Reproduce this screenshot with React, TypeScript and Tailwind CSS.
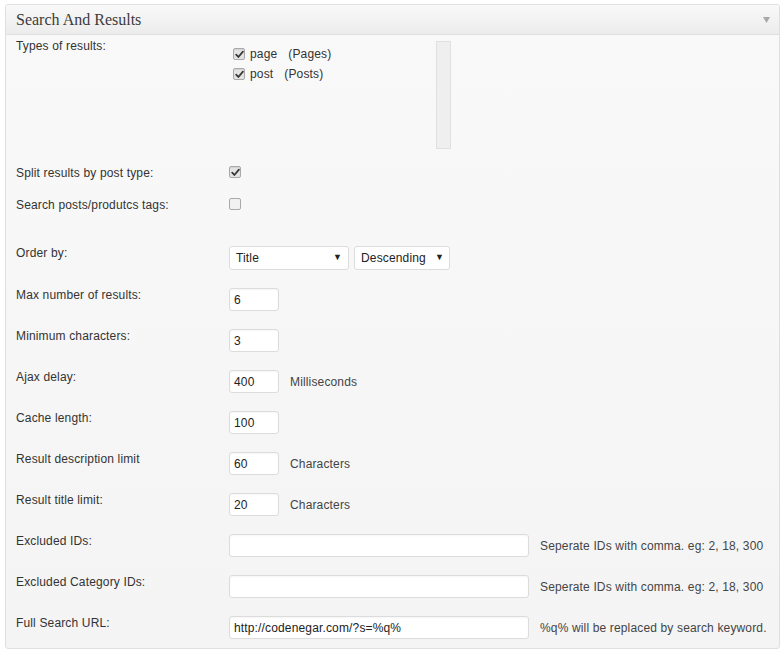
import React from "react";

const font = { fontFamily: '"Liberation Sans", Arial, sans-serif' };

function Check({ checked }: { checked: boolean }) {
  return (
    <span className="flex h-[12px] w-[12px] items-center justify-center rounded-[2px] border border-[#a9a9a9] bg-[#e4e4e4] shadow-[inset_0_1px_1px_rgba(0,0,0,0.08)]">
      {checked && (
        <svg width="9" height="9" viewBox="0 0 9 9">
          <path d="M1.2 4.6 L3.4 7 L7.9 1.6" fill="none" stroke="#3a3a3a" strokeWidth="1.8" strokeLinecap="round" strokeLinejoin="round" />
        </svg>
      )}
    </span>
  );
}

function Input({ value, wide, after }: { value: string; wide?: boolean; after?: string }) {
  return (
    <div className="mt-[1px] flex items-center">
      <div
        className={`flex h-[23px] items-center rounded-[3px] border border-[#dcdcdc] bg-white pl-[4px] text-[12px] text-[#222] shadow-[inset_0_1px_2px_rgba(0,0,0,0.04)] ${wide ? "w-[300px]" : "w-[50px]"}`}
      >
        {value}
      </div>
      {after && <span className="ml-[11px] text-[12px] text-[#444]">{after}</span>}
    </div>
  );
}

function Row({ label, children }: { label: string; children: React.ReactNode }) {
  return (
    <div className="flex h-[41px] items-start">
      <div className="w-[213px] text-[12px] leading-[16px] text-[#333]">{label}</div>
      {children}
    </div>
  );
}

export default function App() {
  return (
    <div className="min-h-[654px] bg-white pl-[5px] pt-[4px] tracking-[0.15px]" style={font}>
      <div className="w-[775px] overflow-hidden rounded-[3px] border border-[#dfdfdf] bg-gradient-to-b from-[#f9f9f9] to-[#f4f4f4]">
        {/* header */}
        <div className="flex h-[30px] items-center justify-between border-b border-[#dfdfdf] bg-gradient-to-b from-[#f9f9f9] to-[#ececec] pl-[10px] pr-[9px]">
          <span className="text-[16px] tracking-normal text-[#3c3c3c]" style={{ fontFamily: '"Liberation Serif", "Times New Roman", serif' }}>
            Search And Results
          </span>
          <svg width="7" height="6" viewBox="0 0 7 6" className="mt-[1px]">
            <path d="M0 0 H7 L3.5 6 Z" fill="#a8a8a8" />
          </svg>
        </div>

        <div className="pl-[10px]">
          {/* types of results */}
          <div className="flex h-[130px] items-start">
            <div className="w-[213px] pt-[3px] text-[12px] leading-[16px] text-[#333]">Types of results:</div>
            <div className="mt-[6px] flex h-[108px] w-[222px]">
              <div className="flex-1 pl-[4px] pt-[3px] text-[12px] text-[#333]">
                <div className="flex h-[20px] items-center">
                  <Check checked />
                  <span className="ml-[5px]">page</span>
                  <span className="ml-[11px]">(Pages)</span>
                </div>
                <div className="flex h-[20px] items-center">
                  <Check checked />
                  <span className="ml-[5px]">post</span>
                  <span className="ml-[11px]">(Posts)</span>
                </div>
              </div>
              <div className="h-full w-[15px] border border-[#e0e0e0] bg-[#efefef]" />
            </div>
          </div>

          {/* split */}
          <div className="flex h-[32px] items-start">
            <div className="w-[213px] text-[12px] leading-[16px] text-[#333]">Split results by post type:</div>
            <div className="mt-[1px] flex">
              <Check checked />
            </div>
          </div>

          {/* tags */}
          <div className="flex h-[48px] items-start">
            <div className="w-[213px] text-[12px] leading-[16px] text-[#333]">Search posts/produtcs tags:</div>
            <div className="mt-[1px] flex">
              <span className="flex h-[12px] w-[12px] rounded-[2px] border border-[#a9a9a9] bg-[#f1f1f1]" />
            </div>
          </div>

          {/* order by */}
          <div className="flex h-[42px] items-start">
            <div className="w-[213px] text-[12px] leading-[16px] text-[#333]">Order by:</div>
            <div className="mt-[1px] flex gap-[5px]">
              <div className="flex h-[24px] w-[120px] items-center justify-between rounded-[3px] border border-[#dcdcdc] bg-white pl-[6px] pr-[6px] text-[12px] text-[#222]">
                <span>Title</span>
                <span className="text-[9px]">▼</span>
              </div>
              <div className="flex h-[24px] w-[96px] items-center justify-between rounded-[3px] border border-[#dcdcdc] bg-white pl-[6px] pr-[5px] text-[12px] text-[#222]">
                <span>Descending</span>
                <span className="text-[9px]">▼</span>
              </div>
            </div>
          </div>

          <Row label="Max number of results:">
            <Input value="6" />
          </Row>
          <Row label="Minimum characters:">
            <Input value="3" />
          </Row>
          <Row label="Ajax delay:">
            <Input value="400" after="Milliseconds" />
          </Row>
          <Row label="Cache length:">
            <Input value="100" />
          </Row>
          <Row label="Result description limit">
            <Input value="60" after="Characters" />
          </Row>
          <Row label="Result title limit:">
            <Input value="20" after="Characters" />
          </Row>
          <Row label="Excluded IDs:">
            <Input value="" wide after="Seperate IDs with comma. eg: 2, 18, 300" />
          </Row>
          <Row label="Excluded Category IDs:">
            <Input value="" wide after="Seperate IDs with comma. eg: 2, 18, 300" />
          </Row>
          <div className="flex h-[33px] items-start">
            <div className="w-[213px] text-[12px] leading-[16px] text-[#333]">Full Search URL:</div>
            <Input value="http://codenegar.com/?s=%q%" wide after="%q% will be replaced by search keyword." />
          </div>
        </div>
      </div>
    </div>
  );
}
